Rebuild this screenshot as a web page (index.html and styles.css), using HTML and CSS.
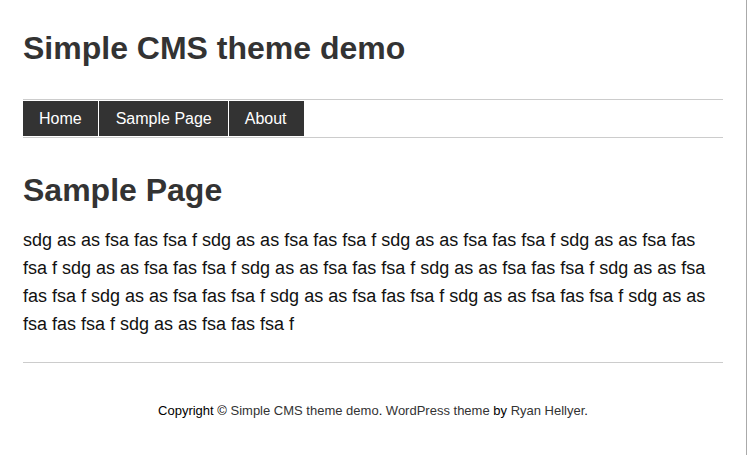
FILE: index.html
```html
<!DOCTYPE html>
<html>
<head>
    <meta charset="utf-8">
    <title>Sample Page | Simple CMS theme demo</title>
    <link rel="stylesheet" href="styles.css">
</head>
<body>
<div class="wrapper">
    <header class="site-header">
        <h1 class="site-title"><a href="#">Simple CMS theme demo</a></h1>
    </header>
    <nav class="main-nav">
        <ul>
            <li><a href="#">Home</a></li>
            <li><a href="#">Sample Page</a></li>
            <li><a href="#">About</a></li>
        </ul>
    </nav>
    <main class="content">
        <h2 class="page-title">Sample Page</h2>
        <p>sdg as as fsa fas fsa f sdg as as fsa fas fsa f sdg as as fsa fas fsa f sdg as as fsa fas fsa f sdg as as fsa fas fsa f sdg as as fsa fas fsa f sdg as as fsa fas fsa f sdg as as fsa fas fsa f sdg as as fsa fas fsa f sdg as as fsa fas fsa f sdg as as fsa fas fsa f sdg as as fsa fas fsa f sdg as as fsa fas fsa f</p>
    </main>
    <footer class="site-footer">
        <p>Copyright &copy; <a href="#">Simple CMS theme demo</a>. <a href="#">WordPress theme</a> by <a href="#">Ryan Hellyer</a>.</p>
    </footer>
</div>
</body>
</html>
```
FILE: styles.css
```css
html {
    background: #fff;
}
body {
    margin: 0;
    font-family: "Liberation Sans", Arial, sans-serif;
    color: #000;
    background: #fff;
}
a {
    color: #333;
    text-decoration: none;
}
.wrapper {
    width: 747px;
    min-height: 455px;
    border-right: 1px solid #aaa;
    box-sizing: border-box;
    padding: 0 23px;
}
.site-header {
    padding: 30px 0 0;
    height: 99px;
    box-sizing: border-box;
}
.site-title {
    margin: 0;
    font-size: 32px;
    line-height: 36px;
    font-weight: bold;
}
.main-nav {
    border-top: 1px solid #ccc;
    border-bottom: 1px solid #ccc;
    padding: 1px 0;
}
.main-nav ul {
    list-style: none;
    margin: 0;
    padding: 0;
    display: flex;
}
.main-nav li a {
    display: block;
    background: #333;
    color: #fff;
    font-size: 16px;
    line-height: 35px;
    padding: 0 16px;
    border-right: 1px solid #fff;
}
.main-nav li:nth-child(2) a {
    padding: 0 16px 0 17px;
}
.main-nav li:last-child a {
    border-right: none;
    padding: 0 17px 0 16px;
}
.content {
    padding-top: 32px;
    border-bottom: 1px solid #ccc;
    padding-bottom: 24px;
}
.page-title {
    margin: 0 0 16px;
    font-size: 32px;
    line-height: 40px;
    color: #333;
}
.content p {
    margin: 0;
    font-size: 18px;
    line-height: 28px;
    color: #111;
}
.site-footer {
    text-align: center;
    padding-top: 40px;
}
.site-footer p {
    margin: 0;
    font-size: 13px;
    line-height: 16px;
}
```
